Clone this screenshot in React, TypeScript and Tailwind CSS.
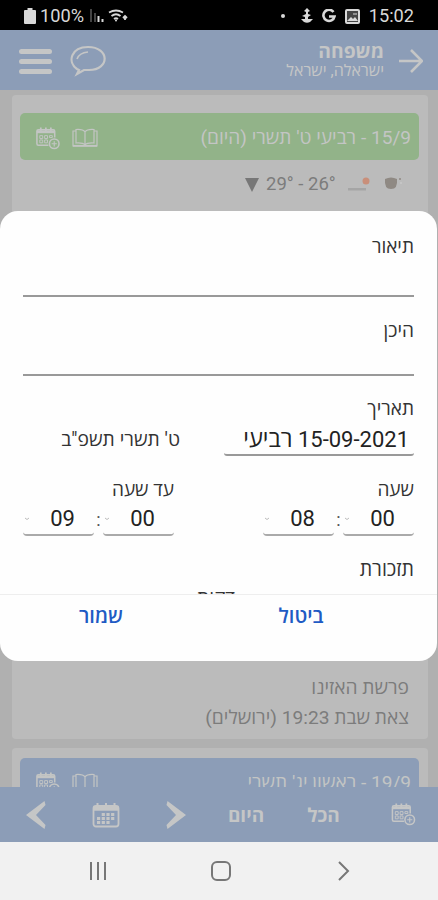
import React from "react";

function CalendarIcon({ badge, className }: { badge?: boolean; className: string }) {
  return (
    <svg viewBox="0 0 28 26" className={className} fill="none" stroke="currentColor" strokeWidth="1.6">
      {badge ? (
        <>
          <path d="M15 20H4.500Q3 20 3 18.500V5.500Q3 4 4.500 4H20Q21.500 4 21.500 5.500V12" />
          <path d="M3 6h18.500" strokeWidth="3" />
          <path d="M7 1.500v4M12.300 1.500v4M17.500 1.500v4" strokeWidth="1.800" />
          <path d="M6 10h3v3H6zM11 10h3v3h-3zM6 14.500h3v3H6zM11 14.500h3v3h-3zM16 10h3v2h-3z" strokeWidth="1" />
          <circle cx="21" cy="18.500" r="5" />
          <path d="M21 15.800v5.400M18.300 18.500h5.400" strokeWidth="1.200" />
        </>
      ) : (
        <>
          <rect x="1.500" y="4" width="25" height="20.500" rx="2.500" strokeWidth="1.800" />
          <path d="M1.500 6.500h25" strokeWidth="4.500" />
          <path d="M5.500 1v5M14 1v5M22.500 1v5" strokeWidth="2" />
          <path d="M9.700 12.500h14M5 16.500h18.500M5 20.500h14" strokeWidth="2.800" strokeDasharray="3.200 1.500" />
        </>
      )}
    </svg>
  );
}

function BookIcon() {
  return (
    <svg viewBox="0 0 26 20" className="h-5 w-[26px]" fill="none" stroke="currentColor" strokeWidth="1.200">
      <path d="M4 3H1v15h24V3h-3M13 4v12M13 4Q11 1 4 1.500v13.500q7-.5 9 2q2-2.500 9-2V1.500Q15 1 13 4" />
      <path d="M1 17.800h24" strokeWidth="1.800" />
    </svg>
  );
}

function Chevron({ flip }: { flip?: boolean }) {
  return (
    <svg viewBox="0 0 20 28" className={flip ? "h-7 w-5 -scale-x-100" : "h-7 w-5"} fill="currentColor">
      <path d="M18.500 0 0 14l18.500 14 1-4L10 14l9.500-10z" />
    </svg>
  );
}

function DayBar({ tone, children }: { tone: string; children: React.ReactNode }) {
  return (
    <div className={`ms-[9px] me-2 flex h-[47px] items-center justify-between rounded-[5px] px-2 text-[#c3c5c4] ${tone}`}>
      <span className="whitespace-nowrap pt-[3px] text-[19.100px]">{children}</span>
      <div className="ml-[6px] flex items-center gap-[11px] pt-[3px]" dir="ltr">
        <CalendarIcon badge className="h-[25px] w-[27px]" />
        <BookIcon />
      </div>
    </div>
  );
}

function Spinner({ value }: { value: string }) {
  return (
    <div className="flex h-[33px] w-[71px] items-center justify-center rounded-b-[4px] border-b-2 border-[#aaa] text-[22px] leading-none text-[#222]">
      <span className="ms-1.5 w-[26px] text-center">{value}</span>
      <svg viewBox="0 0 6 4" className="-me-3 ms-[20px] h-1 w-1.5 fill-none stroke-[#bbb]">
        <path d="m1 1 2 1.500L5 1" />
      </svg>
    </div>
  );
}

function TimeField({ label, hour, minute }: { label: string; hour: string; minute: string }) {
  return (
    <div className="w-[151px]">
      <div className="h-7 text-[19px] leading-[29px]">{label}</div>
      <div className="flex items-center justify-between">
        <Spinner value={minute} />
        <span className="text-[18px] leading-none text-[#555]">:</span>
        <Spinner value={hour} />
      </div>
    </div>
  );
}

function StatusBar() {
  return (
    <div dir="ltr" className="flex h-[30px] items-center bg-black pt-0.5 text-[#d8d8d8]">
      <svg viewBox="0 0 12 16" className="ms-6 h-4 w-3 fill-current">
        <path d="M3.500 0h5v2H11q1 0 1 1v12q0 1-1 1H1q-1 0-1-1V3q0-1 1-1h2.500z" />
      </svg>
      <span className="ms-1 w-[44px] whitespace-nowrap text-[18.200px]">100%</span>
      <svg viewBox="0 0 16 16" className="ms-1.5 h-4 w-4 fill-none stroke-current" strokeWidth="2">
        <path d="M1 1v13M5 5v9" className="stroke-[#444]" />
        <path d="M8.500 8v6M12.500 11v3" />
      </svg>
      <svg viewBox="0 0 20 16" className="ms-0.5 h-4 w-5 fill-none stroke-current" strokeWidth="1.800">
        <path d="M1 4.500Q8 .5 15 4.500M3.500 8Q8 4.500 12.500 8M6 11q2-1.500 4 0" />
        <path d="M17 12V8m-2 2 2-2 2 2" />
        <circle cx="8" cy="12.500" r="1" fill="currentColor" stroke="none" />
      </svg>
      <span className="ms-auto me-[15px] h-1 w-1 rounded-full bg-current" />
      <svg viewBox="0 0 14 16" className="me-[8px] h-4 w-3.5 fill-current">
        <path d="m7 0 3 3-2 1v2l3 1-3 2v2h5l-3 3q-3 1.500-6 0l-3-3h4V9L2 8l4-2V4L4 3z" />
      </svg>
      <svg viewBox="0 0 14 14" className="me-[9px] h-3.5 w-3.5 fill-none stroke-current" strokeWidth="2.600">
        <path d="M11.500 3A5.600 5.600 0 1 0 12.500 7.500H7" />
      </svg>
      <svg viewBox="0 0 15 15" className="me-[9px] h-[15px] w-[15px]">
        <rect x="1" y="1" width="13" height="13" rx="1" className="fill-[#444] stroke-current" strokeWidth="2" />
        <path d="m2 12 4-4 2 2 2-2 3 4z" fill="currentColor" />
        <path d="M8 5h4" stroke="currentColor" />
      </svg>
      <span className="me-[24px] text-[18.200px]">15:02</span>
    </div>
  );
}

function EventDialog() {
  return (
    <div className="absolute left-0 top-[211px] flex h-[450px] w-[437px] flex-col rounded-[18px] bg-[#fefefe] text-[#333]">
      <div className="h-[383px] overflow-hidden px-[23px] pt-[21px]">
        <div className="h-[65px] border-b-2 border-[#999] text-[19px] leading-[30px]">תיאור</div>
        <div className="mt-[18px] h-[61px] border-b-2 border-[#999] text-[19px] leading-[31px]">היכן</div>
        <div className="mt-[20px] h-[22px] text-[19px] leading-[26px]">תאריך</div>
        <div className="flex h-[38px]">
          <div className="h-[38px] w-[190px] whitespace-nowrap rounded-b-[3px] border-b-2 border-[#999] ps-[5px] text-[22px] leading-[42px] text-[#222]">
            15-09-2021 <span className="text-[23.500px]">רביעי</span>
          </div>
          <span className="ms-[44px] whitespace-nowrap text-[19.300px] leading-[44px]">ט' תשרי תשפ"ב</span>
        </div>
        <div className="mt-[19px] flex h-[62px] gap-[89px]">
          <TimeField label="שעה" hour="08" minute="00" />
          <TimeField label="עד שעה" hour="09" minute="00" />
        </div>
        <div className="mt-[18px] h-7 text-[19.600px] leading-[29px]">תזכורת</div>
        <div className="mt-[6px] flex h-[5px] justify-center overflow-hidden ps-[5px] text-[19px] leading-[18px]">
          <span>דקות</span>
        </div>
      </div>
      <div className="flex h-[66px] border-t border-[#eee] text-[20px] font-semibold leading-[42px] text-[#1f5bc4]">
        <span className="ms-[112px] w-[48px] text-center">ביטול</span>
        <span className="ms-[153px] w-[46px] text-center">שמור</span>
      </div>
    </div>
  );
}

export default function App() {
  return (
    <div dir="rtl" className="relative flex h-[900px] w-[438px] flex-col overflow-hidden font-[Roboto,'Open_Sans','Noto_Sans','DejaVu_Sans',sans-serif]">
      <StatusBar />
      <header className="flex h-[60px] items-center bg-[#8c9db7] pt-0.5 text-[#c5c6c6]">
        <svg viewBox="0 0 24 24" className="ms-[15px] h-6 w-6 fill-none stroke-current" strokeWidth="2.600">
          <path d="M0 12h22M12 1l11 11-11 11" />
        </svg>
        <div className="ms-[15px]">
          <div className="h-[21px] text-[19.300px] font-bold leading-[22px]">משפחה</div>
          <div className="h-[19px] whitespace-nowrap text-[16px] leading-[17px]">ישראלה, ישראל</div>
        </div>
        <svg viewBox="0 0 36 32" className="ms-auto h-8 w-9 fill-none stroke-current" strokeWidth="2.200">
          <path d="M7 24C-3 17 1 2 18 2c22 0 22 23 1 23h-5l-7 4 2-4z" />
          <path d="M7 14q2-6 11-7" strokeWidth="1.600" />
        </svg>
        <div className="me-[19px] ms-[18px] flex w-[33px] flex-col gap-[5px]">
          <span className="h-[5px] rounded-sm bg-current" />
          <span className="h-[5px] rounded-sm bg-current" />
          <span className="h-[5px] rounded-sm bg-current" />
        </div>
      </header>
      <main className="h-[697px] overflow-hidden bg-[#b0b0b0] ps-[10px] pe-[12px] pt-[5px]">
        <section className="flex h-[644px] flex-col rounded-[4px] bg-[#bbb] pt-[18px] text-[#7c7c7c]">
          <DayBar tone="bg-[#92b389]">15/9 - רביעי ט' תשרי (היום)</DayBar>
          <div dir="ltr" className="ms-[233px] mt-[13px] flex h-6 items-center">
            <svg viewBox="0 0 14 14" className="h-3.5 w-3.5 fill-[#777]">
              <path d="M0 0h14L7 14z" />
            </svg>
            <span className="ms-[7px] w-[72px] whitespace-nowrap text-[18.500px]">29° - 26°</span>
            <svg viewBox="0 0 24 20" className="ms-[10px] h-5 w-6">
              <path d="M0 13h18v2.500H0z" fill="#a5a5a5" />
              <circle cx="18" cy="6" r="3.500" fill="#c98f7a" />
            </svg>
            <svg viewBox="0 0 20 20" className="ms-3 h-5 w-5 fill-[#8f8983]">
              <path d="M1 4q6-3 12 0 1 10-6 10T1 4" />
              <circle cx="16" cy="4" r="1" />
              <circle cx="17" cy="8" r="1" fill="#c8c8c8" />
            </svg>
          </div>
          <div className="mt-auto pb-[6px] pe-[18px] ps-[19px] text-[19.200px] leading-[30px]">
            <div>פרשת האזינו</div>
            <div>צאת שבת 19:23 (ירושלים)</div>
          </div>
        </section>
        <section className="mt-[9px] rounded-[4px] bg-[#bbb] pt-[10px]">
          <DayBar tone="bg-[#8c9db7]">19/9 - ראשון יג' תשרי</DayBar>
        </section>
      </main>
      <footer dir="ltr" className="flex h-[55px] items-center bg-[#8c9db7] ps-[26px] pe-[21px] text-[19px] font-bold text-[#c5c6c6]">
        <Chevron />
        <CalendarIcon className="ms-[46px] h-[26px] w-7" />
        <span className="ms-[46px] flex">
          <Chevron flip />
        </span>
        <span className="ms-[41px] w-[38px] pt-[3px] text-center">היום</span>
        <span className="ms-[41px] w-[35px] pt-[3px] text-center">הכל</span>
        <CalendarIcon badge className="ms-auto h-[25px] w-[28px]" />
      </footer>
      <nav dir="ltr" className="flex h-[58px] items-center bg-[#f1f1f1]">
        <div className="ms-[90px] flex gap-[5px]">
          <span className="h-[18px] w-0.5 bg-[#777]" />
          <span className="h-[18px] w-0.5 bg-[#777]" />
          <span className="h-[18px] w-0.5 bg-[#777]" />
        </div>
        <div className="ms-[105px] h-5 w-5 rounded-[6px] border-2 border-[#777]" />
        <svg viewBox="0 0 12 20" className="ms-[107px] h-5 w-3 fill-none stroke-[#777]" strokeWidth="2">
          <path d="m1 1 9 9-9 9" />
        </svg>
      </nav>
      <EventDialog />
    </div>
  );
}
